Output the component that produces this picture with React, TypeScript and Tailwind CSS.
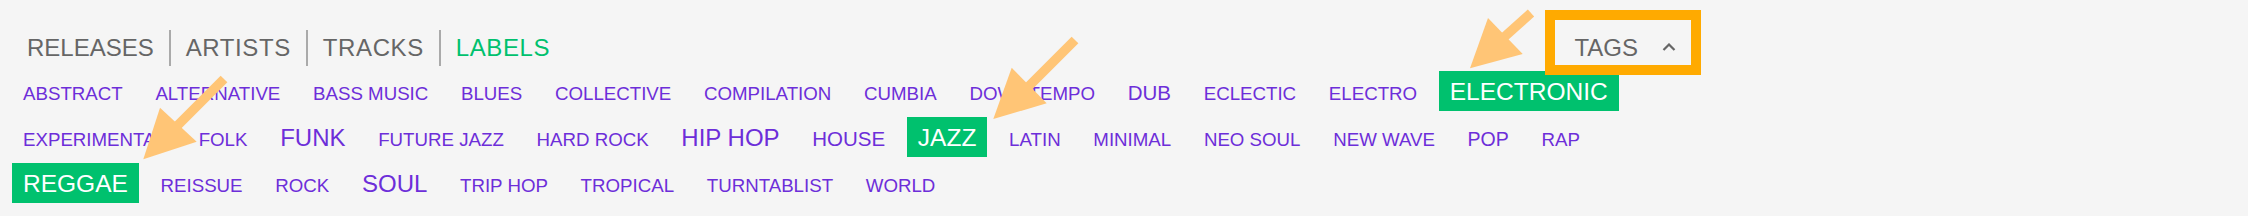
import React from "react";

type Size = "sm" | "md" | "lg" | "xl" | "badge";

interface Tag {
  label: string;
  size: Size;
}

const sizeClass: Record<Size, string> = {
  sm: "text-[18.7px] pt-[13.8px] text-[#6d2ed9]",
  md: "text-[19.5px] pt-[13.1px] text-[#6d2ed9]",
  lg: "text-[20.5px] pt-[12.3px] text-[#6d2ed9]",
  xl: "text-[24px] pt-[9.3px] text-[#6d2ed9]",
  badge: "text-[24.5px] pt-[8.9px] text-white bg-[#00c16e]",
};

const Tags: Tag[] = [
  { label: "ABSTRACT", size: "sm" },
  { label: "ALTERNATIVE", size: "sm" },
  { label: "BASS MUSIC", size: "sm" },
  { label: "BLUES", size: "sm" },
  { label: "COLLECTIVE", size: "sm" },
  { label: "COMPILATION", size: "sm" },
  { label: "CUMBIA", size: "sm" },
  { label: "DOWNTEMPO", size: "sm" },
  { label: "DUB", size: "lg" },
  { label: "ECLECTIC", size: "sm" },
  { label: "ELECTRO", size: "sm" },
  { label: "ELECTRONIC", size: "badge" },
  { label: "EXPERIMENTAL", size: "sm" },
  { label: "FOLK", size: "sm" },
  { label: "FUNK", size: "xl" },
  { label: "FUTURE JAZZ", size: "sm" },
  { label: "HARD ROCK", size: "sm" },
  { label: "HIP HOP", size: "xl" },
  { label: "HOUSE", size: "lg" },
  { label: "JAZZ", size: "badge" },
  { label: "LATIN", size: "sm" },
  { label: "MINIMAL", size: "sm" },
  { label: "NEO SOUL", size: "sm" },
  { label: "NEW WAVE", size: "sm" },
  { label: "POP", size: "md" },
  { label: "RAP", size: "sm" },
  { label: "REGGAE", size: "badge" },
  { label: "REISSUE", size: "sm" },
  { label: "ROCK", size: "sm" },
  { label: "SOUL", size: "xl" },
  { label: "TRIP HOP", size: "sm" },
  { label: "TROPICAL", size: "sm" },
  { label: "TURNTABLIST", size: "sm" },
  { label: "WORLD", size: "sm" },
];

const NavItems = [
  { label: "RELEASES", className: "text-[#666]" },
  { label: "ARTISTS", className: "text-[#666] tracking-[0.6px]" },
  { label: "TRACKS", className: "text-[#666] tracking-[0.6px]" },
  { label: "LABELS", className: "text-[#00c16e] tracking-[0.6px]" },
];

const Arrows = () => (
  <svg
    className="absolute left-0 top-0 pointer-events-none"
    width={2248}
    height={216}
    viewBox="0 0 2248 216"
  >
    <g fill="#ffc576" stroke="#ffc576">
      <line x1={224} y1={79} x2={175} y2={128} strokeWidth={9.5} />
      <polygon points="143.3,159.3 160,107.7 196.7,141.7" stroke="none" />
      <line x1={1075} y1={40} x2={1026} y2={89} strokeWidth={9.5} />
      <polygon points="993.3,119 1011.7,67.7 1046.7,103.3" stroke="none" />
      <line x1={1531} y1={13} x2={1502} y2={39} strokeWidth={9.5} />
      <polygon points="1470,68.3 1488,18 1522.7,54" stroke="none" />
    </g>
  </svg>
);

const App = () => {
  return (
    <div className="relative w-full h-[216px] overflow-hidden bg-[#f5f5f5] font-['Liberation_Sans',Arial,sans-serif]">
      <div className="ml-[12px] w-[1680px] pt-[30px]">
        <div className="flex items-center h-[36px]">
          {NavItems.map((item, id) => (
            <React.Fragment key={id}>
              {id > 0 ? <div className="w-[2px] h-[36px] bg-[#aaa]" /> : null}
              <div
                className={`px-[15px] text-[24px] leading-[36px] ${item.className}`}
              >
                {item.label}
              </div>
            </React.Fragment>
          ))}
          <div className="ml-auto flex items-center h-[36px] pl-[16px] pr-[16px] gap-[24px]">
            <span className="text-[24px] leading-[36px] text-[#666]">TAGS</span>
            <svg width={14} height={8} viewBox="0 0 14 8" className="mb-[3px]">
              <polyline
                points="1.5,7 7,1.5 12.5,7"
                fill="none"
                stroke="#666"
                strokeWidth={2.2}
              />
            </svg>
          </div>
        </div>
        <div className="mt-[5px] flex flex-wrap items-start gap-x-[10.7px] gap-y-[6px]">
          {Tags.map((tag, id) => (
            <div
              key={id}
              className={`h-[40px] px-[11px] leading-none whitespace-nowrap ${sizeClass[tag.size]}`}
            >
              {tag.label}
            </div>
          ))}
        </div>
      </div>
      <div className="absolute left-[1545px] top-[10px] w-[156px] h-[65px] border-[10px] border-[#ffaa00] pointer-events-none" />
      <Arrows />
    </div>
  );
};

export default App;
